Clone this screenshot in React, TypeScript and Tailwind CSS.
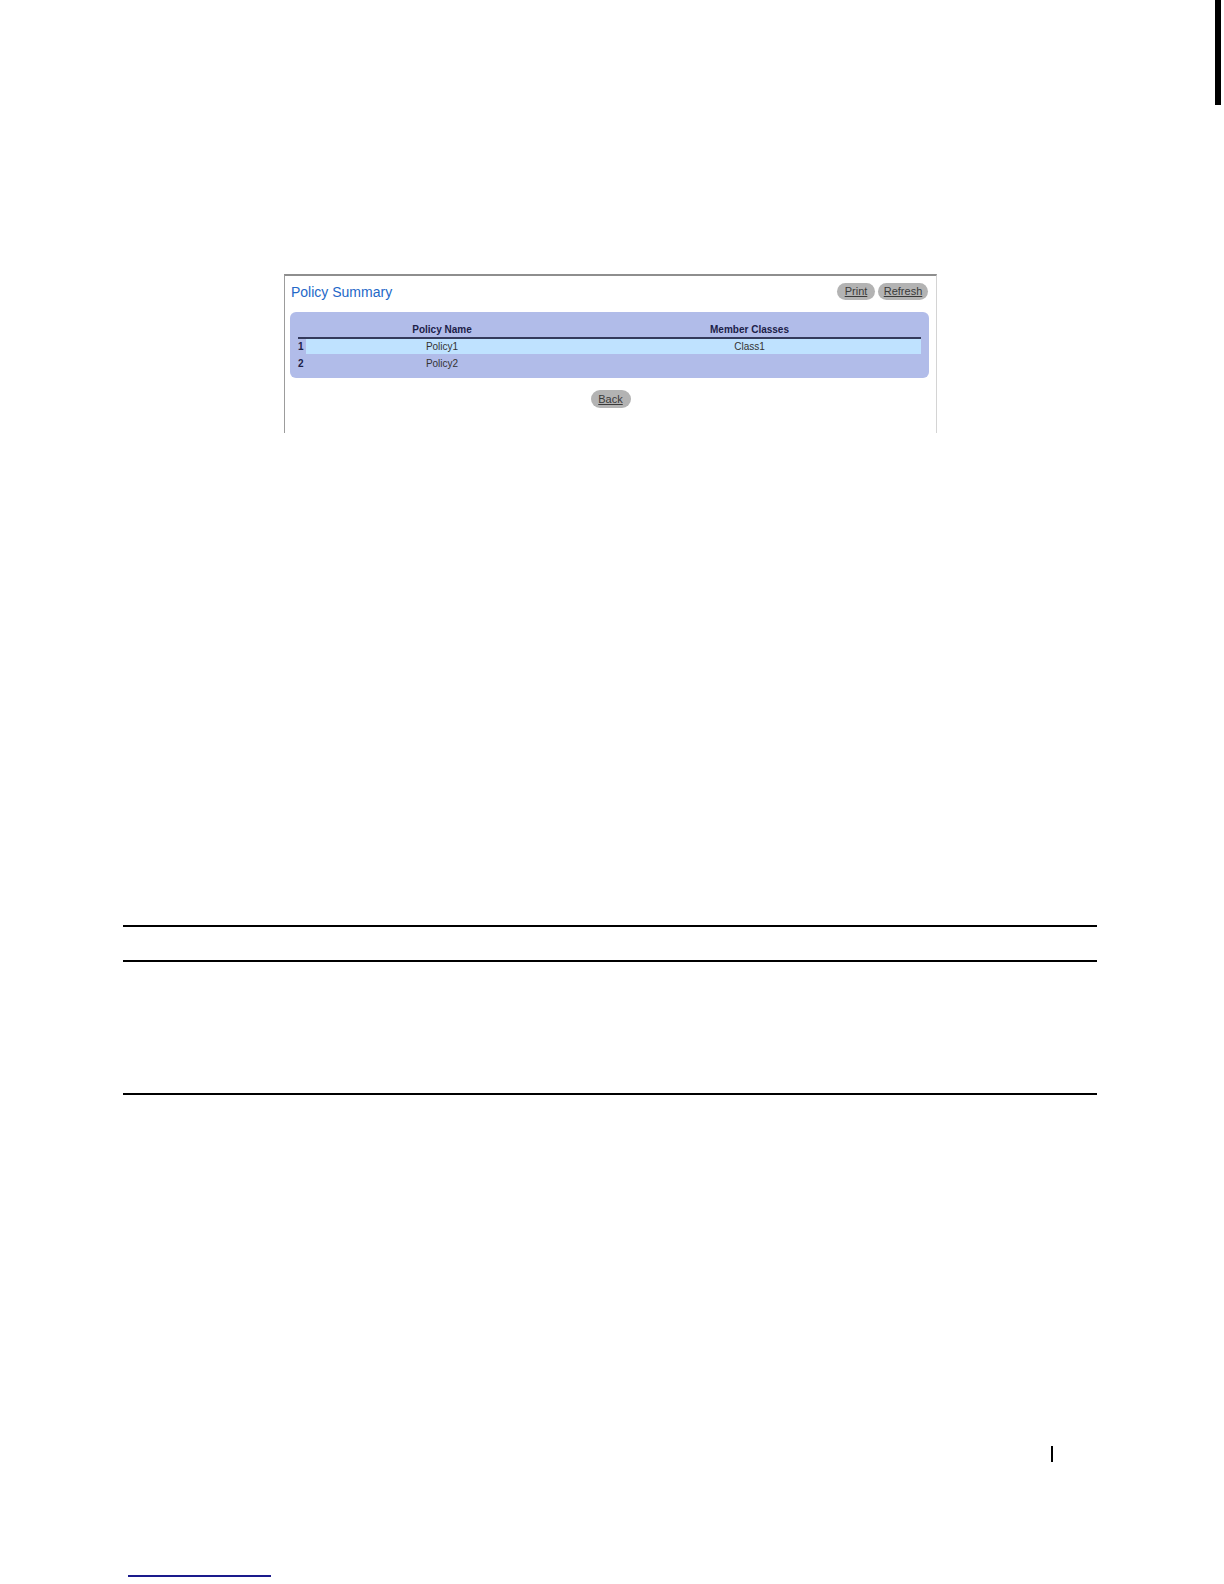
import React from 'react';

// ============================================================================
// Constants
// ============================================================================

const POLICIES: { index: number; name: string; classes: string; highlighted: boolean }[] = [
  { index: 1, name: 'Policy1', classes: 'Class1', highlighted: true },
  { index: 2, name: 'Policy2', classes: '', highlighted: false },
];

// ============================================================================
// Sub-Components
// ============================================================================

function PillButton({ label, width }: { label: string; width: string }): React.ReactElement {
  return (
    <button
      className={`${width} h-[17px] rounded-full bg-[#b3b3b3] text-[11px] leading-none text-[#3a3a3a] underline flex items-center justify-center`}
    >
      {label}
    </button>
  );
}

function PolicySummaryShot(): React.ReactElement {
  return (
    <div className="ml-[284px] w-[653px] h-[159px] border-t-2 border-t-[#8e8e8e] border-l border-l-[#9c9c9c] border-r border-r-[#d4d4d4] bg-white flex flex-col">
      {/* Header */}
      <div className="mt-[7px] h-[17px] flex items-center justify-between pl-[6px] pr-[8px]">
        <h3 className="text-[14px] leading-none text-[#2468c8]">Policy Summary</h3>
        <div className="flex gap-[3px]">
          <PillButton label="Print" width="w-[38px]" />
          <PillButton label="Refresh" width="w-[50px]" />
        </div>
      </div>

      {/* Table panel */}
      <div className="mt-[12px] ml-[5px] mr-[7px] rounded-[6px] bg-[#b1bce9] px-[8px] pt-[10px] pb-[7px]">
        <div className="flex h-[17px] items-center border-b-2 border-b-[#343a5c] text-[10px] font-bold text-[#1c2149]">
          <div className="w-[8px]" />
          <div className="w-[272px] text-center">Policy Name</div>
          <div className="flex-1 text-center">Member Classes</div>
        </div>
        {POLICIES.map((row) => (
          <div
            key={row.index}
            className="flex h-[15px] items-center text-[10px] text-[#333333] mb-[1px] last:mb-0 last:h-[16px]"
          >
            <div className="w-[8px] font-bold text-[#1c2149]">{row.index}</div>
            <div className={`flex flex-1 h-full items-center ${row.highlighted ? 'bg-[#bfe2ff]' : ''}`}>
              <div className="w-[272px] text-center">{row.name}</div>
              <div className="flex-1 text-center">{row.classes}</div>
            </div>
          </div>
        ))}
      </div>

      {/* Actions */}
      <div className="mt-[12px] flex justify-center">
        <button className="w-[40px] h-[18px] rounded-full bg-[#b3b3b3] text-[11px] leading-none text-[#3a3a3a] underline flex items-center justify-center">
          Back
        </button>
      </div>
    </div>
  );
}

// ============================================================================
// Main Component
// ============================================================================

export default function App(): React.ReactElement {
  return (
    <div
      className="w-[1224px] h-[1584px] bg-white overflow-hidden"
      style={{ fontFamily: '"Liberation Sans", Arial, sans-serif' }}
    >
      {/* Edge tab */}
      <div className="h-[105px] flex justify-end pr-[3px]">
        <div className="w-[6px] h-full bg-black" />
      </div>

      <div className="mt-[169px]">
        <PolicySummaryShot />
      </div>

      {/* Rule lines */}
      <div className="mt-[492px] ml-[123px] w-[974px]">
        <div className="h-[2px] bg-black" />
        <div className="h-[33px]" />
        <div className="h-[2px] bg-black" />
        <div className="h-[131px]" />
        <div className="h-[2px] bg-black" />
      </div>

      {/* Page marker */}
      <div className="mt-[351px] ml-[1051px] w-[2px] h-[16px] bg-black" />

      {/* Footer link rule */}
      <div className="mt-[113px] ml-[128px] w-[143px] h-[2px] bg-[#1a1a8c]" />
    </div>
  );
}
